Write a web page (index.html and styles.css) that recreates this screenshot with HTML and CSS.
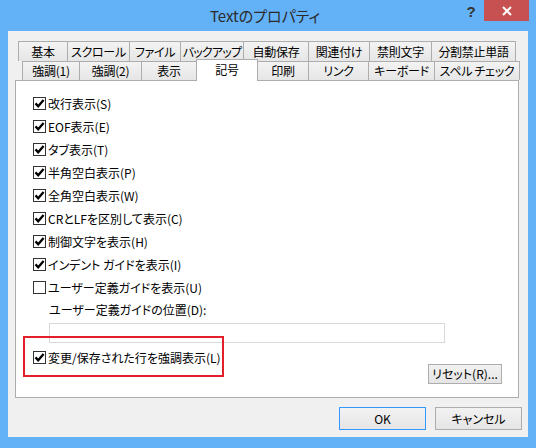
FILE: index.html
```html
<!DOCTYPE html>
<html lang="ja">
<head>
<meta charset="utf-8">
<title>Textのプロパティ</title>
<link rel="stylesheet" href="styles.css">
</head>
<body>
<div class="window">
  <div class="titlebar">
    <div class="title">Textのプロパティ</div>
    <div class="help">?</div>
    <div class="close">
      <svg width="10" height="10" viewBox="0 0 10 10"><path d="M1 1 L9 9 M9 1 L1 9" stroke="#fff" stroke-width="2" fill="none"/></svg>
    </div>
  </div>
  <div class="client">
    <div class="tabs">
      <div class="tabrow row1">
        <div class="tab">基本</div>
        <div class="tab">スクロール</div>
        <div class="tab">ファイル</div>
        <div class="tab">バックアップ</div>
        <div class="tab">自動保存</div>
        <div class="tab">関連付け</div>
        <div class="tab">禁則文字</div>
        <div class="tab">分割禁止単語</div>
      </div>
      <div class="tabrow row2">
        <div class="tab">強調(1)</div>
        <div class="tab">強調(2)</div>
        <div class="tab">表示</div>
        <div class="tab sel">記号</div>
        <div class="tab">印刷</div>
        <div class="tab">リンク</div>
        <div class="tab">キーボード</div>
        <div class="tab">スペル チェック</div>
      </div>
    </div>
    <div class="panel">
      <div class="cb"><span class="box on"><svg width="11" height="11" viewBox="0 0 11 11"><path d="M1.5 5.4 L4.2 8.3 L9.6 1.9" stroke="#000" stroke-width="2.3" fill="none"/></svg></span><span>改行表示(S)</span></div>
      <div class="cb"><span class="box on"><svg width="11" height="11" viewBox="0 0 11 11"><path d="M1.5 5.4 L4.2 8.3 L9.6 1.9" stroke="#000" stroke-width="2.3" fill="none"/></svg></span><span>EOF表示(E)</span></div>
      <div class="cb"><span class="box on"><svg width="11" height="11" viewBox="0 0 11 11"><path d="M1.5 5.4 L4.2 8.3 L9.6 1.9" stroke="#000" stroke-width="2.3" fill="none"/></svg></span><span>タブ表示(T)</span></div>
      <div class="cb"><span class="box on"><svg width="11" height="11" viewBox="0 0 11 11"><path d="M1.5 5.4 L4.2 8.3 L9.6 1.9" stroke="#000" stroke-width="2.3" fill="none"/></svg></span><span>半角空白表示(P)</span></div>
      <div class="cb"><span class="box on"><svg width="11" height="11" viewBox="0 0 11 11"><path d="M1.5 5.4 L4.2 8.3 L9.6 1.9" stroke="#000" stroke-width="2.3" fill="none"/></svg></span><span>全角空白表示(W)</span></div>
      <div class="cb"><span class="box on"><svg width="11" height="11" viewBox="0 0 11 11"><path d="M1.5 5.4 L4.2 8.3 L9.6 1.9" stroke="#000" stroke-width="2.3" fill="none"/></svg></span><span>CRとLFを区別して表示(C)</span></div>
      <div class="cb"><span class="box on"><svg width="11" height="11" viewBox="0 0 11 11"><path d="M1.5 5.4 L4.2 8.3 L9.6 1.9" stroke="#000" stroke-width="2.3" fill="none"/></svg></span><span>制御文字を表示(H)</span></div>
      <div class="cb"><span class="box on"><svg width="11" height="11" viewBox="0 0 11 11"><path d="M1.5 5.4 L4.2 8.3 L9.6 1.9" stroke="#000" stroke-width="2.3" fill="none"/></svg></span><span>インデント ガイドを表示(I)</span></div>
      <div class="cb"><span class="box"></span><span>ユーザー定義ガイドを表示(U)</span></div>
      <div class="field-label">ユーザー定義ガイドの位置(D):</div>
      <div class="input"></div>
      <div class="bottom">
        <div class="cb"><span class="box on"><svg width="11" height="11" viewBox="0 0 11 11"><path d="M1.5 5.4 L4.2 8.3 L9.6 1.9" stroke="#000" stroke-width="2.3" fill="none"/></svg></span><span>変更/保存された行を強調表示(L)</span></div>
        <div class="reset">リセット(R)...</div>
      </div>
      <div class="highlight"></div>
    </div>
    <div class="footer">
      <div class="btn default">OK</div>
      <div class="btn">キャンセル</div>
    </div>
  </div>
</div>
</body>
</html>
```

FILE: styles.css
```css
* { box-sizing: border-box; }
html, body { margin: 0; padding: 0; }
body {
  font-family: "Noto Sans CJK JP", "Noto Sans", sans-serif;
  font-size: 12px;
  font-feature-settings: "palt";
  color: #000;
}
.window {
  width: 536px;
  height: 448px;
  background: #63b1f6;
  overflow: hidden;
}
.titlebar {
  height: 31px;
  display: flex;
  align-items: flex-start;
}
.title {
  flex: 1;
  text-align: center;
  padding-left: 70px;
  line-height: 31px;
  font-size: 15px;
  color: #2b2b2b;
}
.help {
  width: 20px;
  margin-top: 3px;
  line-height: 18px;
  font-family: "Liberation Sans", sans-serif;
  font-size: 15px;
  font-weight: bold;
  color: #333;
  text-align: center;
  padding-left: 2px;
}
.close {
  width: 45px;
  height: 21px;
  margin: 0 7px 0 4px;
  background: #c75050;
  display: flex;
  align-items: center;
  justify-content: center;
}
.client {
  margin: 0 8px;
  height: 406px;
  background: #f0f0f0;
  padding-top: 10px;
}
.tabrow { display: flex; }
.row1 { margin-left: 10px; height: 20px; }
.row2 { margin-left: 14px; height: 19px; }
.tab {
  border: 1px solid #adadad;
  border-bottom: none;
  border-left: none;
  background: linear-gradient(#f3f3f3, #e6e6e6);
  text-align: center;
  white-space: nowrap;
  overflow: hidden;
  letter-spacing: -0.3px;
}
.tab:first-child { border-left: 1px solid #adadad; }
.row1 .tab { height: 20px; line-height: 19px; }
.row2 .tab { height: 19px; line-height: 18px; }

.row1 .tab:nth-child(1) { width: 50px; }
.row1 .tab:nth-child(2) { width: 62px; }
.row1 .tab:nth-child(3) { width: 51px; }
.row1 .tab:nth-child(4) { width: 63px; letter-spacing: -0.8px; }
.row1 .tab:nth-child(5) { width: 65px; }
.row1 .tab:nth-child(6) { width: 61px; }
.row1 .tab:nth-child(7) { width: 62px; }
.row1 .tab:nth-child(8) { width: 84px; }

.row2 .tab:nth-child(1) { width: 58px; }
.row2 .tab:nth-child(2) { width: 62px; }
.row2 .tab:nth-child(3) { width: 55px; }
.row2 .tab:nth-child(4) { width: 62px; }
.row2 .tab:nth-child(5) { width: 51px; }
.row2 .tab:nth-child(6) { width: 60px; }
.row2 .tab:nth-child(7) { width: 66px; }
.row2 .tab:nth-child(8) { width: 85px; }

.row2 .tab.sel {
  background: #fff;
  border-left: 1px solid #adadad;
  margin-left: -1px;
  margin-top: -2px;
  height: 22px;
  line-height: 20px;
  position: relative;
  z-index: 1;
}
.panel {
  position: relative;
  margin-left: 7px;
  width: 504px;
  border: 1px solid #adadad;
  background: #fff;
  padding: 11px 16px 13px 17px;
}
.cb {
  display: flex;
  align-items: center;
  height: 23px;
  white-space: nowrap;
}
.box {
  width: 13px;
  height: 13px;
  border: 1px solid #333;
  background: #fff;
  margin-right: 2px;
  flex: none;
  display: flex;
  align-items: center;
  justify-content: center;
}
.box svg { display: block; }
.field-label {
  height: 22px;
  line-height: 22px;
  margin-left: 16px;
}
.input {
  margin: 2px 0 0 16px;
  width: 396px;
  height: 20px;
  border: 1px solid #d9d9d9;
  background: #fff;
}
.bottom {
  display: flex;
  justify-content: space-between;
  align-items: flex-start;
  margin-top: 3px;
}
.reset {
  margin-top: 18px;
  width: 74px;
  height: 20px;
  border: 1px solid #adadad;
  background: linear-gradient(#f2f2f2, #e5e5e5);
  line-height: 18px;
  text-align: center;
  white-space: nowrap;
}
.highlight {
  position: absolute;
  left: 7px;
  top: 255px;
  width: 201px;
  height: 41px;
  border: 2px solid #e3202a;
}
.footer {
  display: flex;
  justify-content: flex-end;
  gap: 9px;
  margin-top: 9px;
  padding-right: 6px;
}
.btn {
  width: 87px;
  height: 23px;
  border: 1px solid #adadad;
  background: linear-gradient(#f2f2f2, #e5e5e5);
  line-height: 21px;
  text-align: center;
}
.btn.default { border-color: #3399ff; }
```
